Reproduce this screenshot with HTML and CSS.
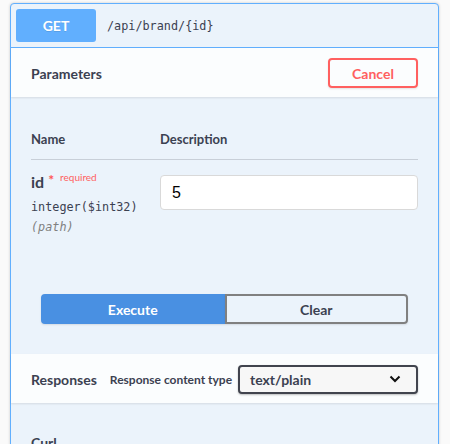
FILE: index.html
```html
<!DOCTYPE html>
<html>
<head>
<meta charset="utf-8">
<link rel="stylesheet" href="styles.css">
</head>
<body>
<div class="opblock">
  <div class="summary">
    <span class="method">GET</span>
    <span class="path">/api/brand/{id}</span>
  </div>
  <div class="section-header">
    <h4 class="title">Parameters</h4>
    <button class="btn-cancel">Cancel</button>
  </div>
  <div class="params">
    <div class="param-head">
      <div class="col-name">Name</div>
      <div class="col-desc">Description</div>
    </div>
    <div class="param-row">
      <div class="col-name">
        <div class="pname">id<span class="star">*</span><span class="req">required</span></div>
        <div class="ptype">integer($int32)</div>
        <div class="pin">(path)</div>
      </div>
      <div class="col-desc">
        <div class="input">5</div>
      </div>
    </div>
  </div>
  <div class="btn-group">
    <button class="btn-execute">Execute</button>
    <button class="btn-clear">Clear</button>
  </div>
  <div class="section-header resp">
    <h4 class="title">Responses</h4>
    <span class="ctype">Response content type</span>
    <div class="select">
      <span>text/plain</span>
      <svg width="12" height="8" viewBox="0 0 12 8"><polyline points="1.5,1.5 6,6 10.5,1.5" fill="none" stroke="#111" stroke-width="2"/></svg>
    </div>
  </div>
  <div class="curl">
    <h4 class="curl-title">Curl</h4>
  </div>
</div>
</body>
</html>
```
FILE: styles.css
```css
* { box-sizing: border-box; }
html, body { margin: 0; padding: 0; }
body {
  background: #fafafa;
  font-family: Lato, "Open Sans", sans-serif;
  color: #3b4151;
  height: 444px;
  overflow: hidden;
}
.opblock {
  margin: 3px 11px 0 10px;
  border: 1px solid #61affe;
  border-radius: 4px;
  background: #ebf3fb;
  box-shadow: 0 0 3px rgba(0,0,0,.19);
  height: 460px;
}
.summary {
  display: flex;
  align-items: center;
  padding: 5px;
  border-bottom: 1px solid #61affe;
}
.method {
  width: 80px;
  height: 33px;
  line-height: 33px;
  background: #61affe;
  color: #fff;
  border-radius: 3px;
  text-align: center;
  font-weight: 700;
  font-size: 14px;
  text-shadow: 0 1px 0 rgba(0,0,0,.1);
}
.path {
  margin-left: 11px;
  font-family: "DejaVu Sans Mono", monospace;
  font-size: 11.8px;
  color: #3b4151;
}
.section-header {
  display: flex;
  align-items: center;
  justify-content: space-between;
  padding: 10px 20px 9px;
  background: rgba(255,255,255,.8);
  box-shadow: 0 1px 2px rgba(0,0,0,.1);
  min-height: 49px;
}
.title {
  margin: 0;
  font-size: 14px;
  font-weight: 700;
}
.btn-cancel {
  width: 90px;
  height: 30px;
  border: 2px solid #ff6060;
  border-radius: 4px;
  background: transparent;
  color: #ff6060;
  font-family: Lato, sans-serif;
  font-weight: 700;
  font-size: 14px;
  box-shadow: 0 1px 2px rgba(0,0,0,.1);
}
.params {
  padding: 34px 20px 0;
}
.param-head {
  display: flex;
  font-size: 13px;
  font-weight: 700;
  padding-bottom: 12px;
  border-bottom: 1px solid rgba(59,65,81,.2);
}
.col-name { width: 129px; flex: none; }
.col-desc { flex: 1; }
.param-row {
  display: flex;
  padding-top: 15px;
}
.pname {
  margin-top: -3px;
  font-size: 16px;
  font-weight: 700;
  line-height: 20px;
}
.star {
  color: #f55;
  font-size: 14px;
  margin-left: 4px;
  position: relative;
  top: -3px;
}
.req {
  color: #ff6060;
  font-size: 10px;
  font-weight: 400;
  margin-left: 6px;
  position: relative;
  top: -7px;
}
.ptype {
  margin-top: 3px;
  font-family: "DejaVu Sans Mono", monospace;
  font-size: 11.8px;
  line-height: 20px;
}
.pin {
  font-family: "DejaVu Sans Mono", monospace;
  font-size: 11.8px;
  font-style: italic;
  color: #808080;
  line-height: 20px;
}
.input {
  height: 35px;
  border: 1px solid #d9d9d9;
  border-radius: 4px;
  background: #fff;
  padding: 0 11px;
  line-height: 33px;
  font-family: "Liberation Sans", Arial, sans-serif;
  font-size: 16px;
  color: #000;
}
.btn-group {
  display: flex;
  margin: 57px 30px 30px;
  height: 30px;
}
.btn-group button {
  flex: 1;
  font-family: Lato, sans-serif;
  font-weight: 700;
  font-size: 14px;
  box-shadow: 0 1px 2px rgba(0,0,0,.1);
}
.btn-execute {
  background: #4990e2;
  border: 2px solid #4990e2;
  color: #fff;
  border-radius: 4px 0 0 4px;
}
.btn-clear {
  background: transparent;
  border: 2px solid #808080;
  color: #3b4151;
  border-radius: 0 4px 4px 0;
}
.resp { justify-content: flex-start; }
.ctype {
  margin-left: 13px;
  font-size: 12px;
  font-weight: 700;
}
.select {
  margin-left: auto;
  width: 180px;
  height: 29px;
  border: 2px solid #41444e;
  border-radius: 4px;
  background: #f7f7f7;
  box-shadow: 0 1px 2px rgba(0,0,0,.25);
  display: flex;
  align-items: center;
  justify-content: space-between;
  padding: 0 15px 0 10px;
  font-size: 14px;
  font-weight: 700;
}
.curl {
  padding: 31px 20px 0;
}
.curl-title {
  margin: 0;
  font-size: 14px;
  font-weight: 700;
}
```
